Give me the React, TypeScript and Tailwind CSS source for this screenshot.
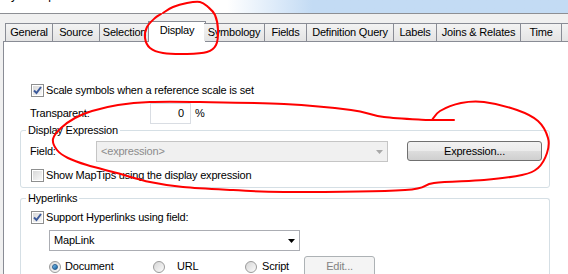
import React from 'react';

const tabs = [
  { label: 'General', w: 48 },
  { label: 'Source', w: 47 },
  { label: 'Selection', w: 50 },
  { label: 'Display', w: 54, active: true },
  { label: 'Symbology', w: 61 },
  { label: 'Fields', w: 42 },
  { label: 'Definition Query', w: 87 },
  { label: 'Labels', w: 43 },
  { label: 'Joins & Relates', w: 84 },
  { label: 'Time', w: 41 },
  { label: 'HTML Popup', w: 84 },
];

// red pen marks drawn over the dialog
const circlePts: [number, number][] = [
  [163, 13], [173, 7], [187, 3], [200, 2], [208, 7], [215, 15], [218, 30], [216, 45],
  [207, 52], [187, 54], [163, 53], [150, 48], [145, 38], [147, 27], [155, 18], [161, 14],
];
const loopPts: [number, number][] = [
  [427, 120], [384, 117], [351, 110], [284, 104], [200, 102], [150, 102], [118, 105], [92, 111],
  [75, 118], [61, 128], [53, 139], [57, 150], [68, 158], [87, 165], [117, 173], [150, 182],
  [183, 187], [233, 190], [284, 192], [405, 190], [434, 183], [484, 180], [522, 175],
  [538, 168], [547, 153], [548, 138], [538, 121], [517, 110], [484, 102], [461, 103],
  [440, 111], [432, 120],
];

function smooth(pts: [number, number][]) {
  let d = `M ${pts[0][0]} ${pts[0][1]}`;
  for (let i = 0; i < pts.length - 1; i++) {
    const p0 = pts[i - 1] || pts[i];
    const p1 = pts[i];
    const p2 = pts[i + 1];
    const p3 = pts[i + 2] || p2;
    const c1x = p1[0] + (p2[0] - p0[0]) / 6;
    const c1y = p1[1] + (p2[1] - p0[1]) / 6;
    const c2x = p2[0] - (p3[0] - p1[0]) / 6;
    const c2y = p2[1] - (p3[1] - p1[1]) / 6;
    d += ` C ${c1x} ${c1y}, ${c2x} ${c2y}, ${p2[0]} ${p2[1]}`;
  }
  return d;
}

const Checkbox = ({ checked }: { checked?: boolean }) => (
  <span className="w-[13px] h-[13px] shrink-0 border border-[#8e8f8f] bg-white p-[1px] flex">
    <span className="flex-1 bg-gradient-to-br from-[#d8d8d8] to-[#f8f8f8] flex items-center justify-center">
      {checked && (
        <svg width="9" height="9" viewBox="0 0 9 9">
          <path d="M1 4.5 L3.5 7 L8 1" fill="none" stroke="#3c5a9b" strokeWidth="2" />
        </svg>
      )}
    </span>
  </span>
);

const Radio = ({ checked }: { checked?: boolean }) => (
  <span className="w-[12px] h-[12px] shrink-0 rounded-full border border-[#9a9a9a] bg-gradient-to-br from-[#d6d6d6] to-[#fbfbfb] flex items-center justify-center">
    {checked && <span className="w-[6px] h-[6px] rounded-full bg-gradient-to-br from-[#7ac3ef] to-[#0b5c9e] border border-[#2b5f8f]" />}
  </span>
);

const Group = ({ title, children, className }: { title: string; children: React.ReactNode; className?: string }) => (
  <fieldset className={`ml-[16px] w-[530px] border border-[#d5dfe5] rounded-[3px] ${className || ''}`}>
    <legend className="ml-[5px] px-[2px] leading-[13px]">{title}</legend>
    {children}
  </fieldset>
);

export default function App() {
  return (
    <div
      className="relative w-[568px] h-[274px] overflow-hidden bg-[#f0f0f0] text-[11px] tracking-[-0.2px] text-black flex flex-col"
      style={{ fontFamily: '"Liberation Sans", Arial, sans-serif' }}
    >
      {/* title bar, cut off at the top */}
      <div className="h-[14px] shrink-0 border-b border-[#8d8f94] bg-gradient-to-r from-white from-40% to-[#c3dbf4] to-55% overflow-hidden">
        <div className="-mt-[12px] ml-[-2px] text-[12px] leading-[14px] text-black">Layer Properties</div>
      </div>

      {/* tab strip */}
      <div className="h-[27px] shrink-0 flex items-end pl-[5px] relative z-10">
        {tabs.map((t) =>
          t.active ? (
            <div
              key={t.label}
              className="h-[21px] -mb-[1px] -mx-[2px] border border-b-0 border-[#898c95] bg-white flex items-center justify-center shrink-0"
              style={{ width: t.w + 4 }}
            >
              <span className="-mt-[3px]">{t.label}</span>
            </div>
          ) : (
            <div
              key={t.label}
              className="h-[18px] border border-b-0 border-l-0 first:border-l border-[#898c95] bg-gradient-to-b from-[#f3f3f3] to-[#e4e4e4] flex items-center justify-center shrink-0 whitespace-nowrap overflow-hidden"
              style={{ width: t.w }}
            >
              {t.label}
            </div>
          )
        )}
      </div>

      {/* page */}
      <div className="flex-1 ml-[3px] bg-white border-l border-t border-[#898c95] flex flex-col">
        <div className="mt-[42px] pl-[27px] h-[13px] flex items-center gap-[1px]">
          <Checkbox checked />
          <span className="ml-[1px]">Scale symbols when a reference scale is set</span>
        </div>
        <div className="mt-[6px] pl-[26px] h-[21px] flex items-center">
          <span className="w-[120px]">Transparent:</span>
          <span className="w-[41px] h-[21px] border border-[#d9dde3] flex items-center justify-end pr-[6px]">0</span>
          <span className="ml-[4px]">%</span>
        </div>

        <Group title="Display Expression" className="pb-[5px]">
          <div className="mt-[4px] pl-[9px] flex items-start">
            <span className="w-[66px] h-[21px] flex items-center">Field:</span>
            <div className="w-[292px] h-[21px] border border-[#c5c5c5] bg-[#f0f0f0] flex items-center">
              <span className="flex-1 pl-[4px] text-[#8c8c8c]">&lt;expression&gt;</span>
              <span className="w-[16px] h-full flex items-center justify-center">
                <svg width="7" height="4" viewBox="0 0 7 4">
                  <path d="M0 0 H7 L3.5 4 Z" fill="#a8a8a8" />
                </svg>
              </span>
            </div>
            <button className="ml-[19px] w-[135px] h-[20px] rounded-[3px] border border-[#707070] bg-[linear-gradient(#f2f2f2_0%,#ebebeb_50%,#dddddd_51%,#cfcfcf_100%)] flex items-center justify-center">
              Expression...
            </button>
          </div>
          <div className="mt-[7px] pl-[10px] h-[13px] flex items-center gap-[2px]">
            <Checkbox />
            <span>Show MapTips using the display expression</span>
          </div>
        </Group>

        <Group title="Hyperlinks" className="mt-[4px] flex-1 border-b-0 rounded-b-none">
          <div className="mt-[6px] pl-[10px] h-[13px] flex items-center gap-[2px]">
            <Checkbox checked />
            <span>Support Hyperlinks using field:</span>
          </div>
          <div className="mt-[6px] ml-[28px] w-[251px] h-[21px] border border-[#abadb3] bg-white flex items-center">
            <span className="flex-1 pl-[4px]">MapLink</span>
            <span className="w-[16px] h-full flex items-center justify-center">
              <svg width="7" height="4" viewBox="0 0 7 4">
                <path d="M0 0 H7 L3.5 4 Z" fill="#000" />
              </svg>
            </span>
          </div>
          <div className="mt-[5px] ml-[28px] h-[21px] flex items-center">
            <label className="w-[104px] flex items-center gap-[4px]">
              <Radio checked />
              <span>Document</span>
            </label>
            <label className="w-[92px] flex items-center gap-[12px]">
              <Radio />
              <span>URL</span>
            </label>
            <label className="w-[59px] flex items-center gap-[5px]">
              <Radio />
              <span>Script</span>
            </label>
            <button className="w-[71px] h-[21px] rounded-[3px] border border-[#adb2b5] bg-[#f4f4f4] text-[#838383] flex items-center justify-center">
              Edit...
            </button>
          </div>
        </Group>
      </div>

      <svg className="absolute inset-0 pointer-events-none z-20" width="568" height="274" viewBox="0 0 568 274">
        <path d={smooth(circlePts)} fill="none" stroke="#f00" strokeWidth="2" strokeLinecap="round" />
        <path d={smooth(loopPts)} fill="none" stroke="#f00" strokeWidth="2" strokeLinecap="round" />
        <path d="M427 120 L454 120" fill="none" stroke="#f00" strokeWidth="2" strokeLinecap="round" />
      </svg>
    </div>
  );
}
